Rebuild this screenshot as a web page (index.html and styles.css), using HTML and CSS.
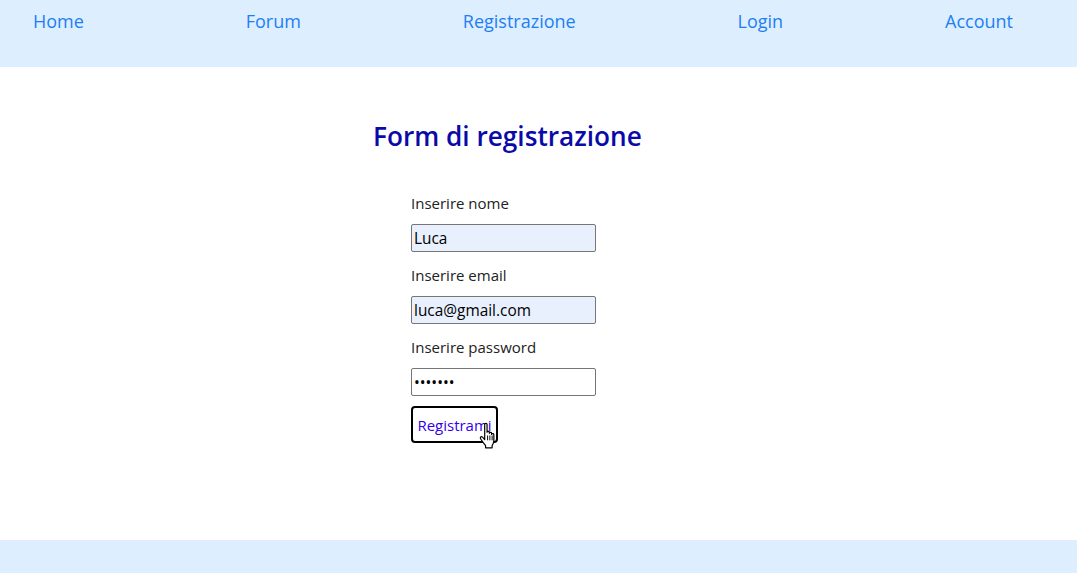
FILE: index.html
```html
<!DOCTYPE html>
<html lang="it">
<head>
<meta charset="utf-8">
<title>Registrazione</title>
<link rel="stylesheet" href="styles.css">
</head>
<body>
<header class="topbar">
  <nav class="nav">
    <a class="nav-link" href="#">Home</a>
    <a class="nav-link" href="#">Forum</a>
    <a class="nav-link" href="#">Registrazione</a>
    <a class="nav-link" href="#">Login</a>
    <a class="nav-link" href="#">Account</a>
  </nav>
</header>
<main class="main">
  <section class="panel">
    <h2 class="title">Form di registrazione</h2>
    <form class="form">
      <label class="label" for="nome">Inserire nome</label>
      <input class="field autofill" id="nome" type="text" value="Luca">
      <label class="label" for="email">Inserire email</label>
      <input class="field autofill" id="email" type="email" value="luca@gmail.com">
      <label class="label" for="pw">Inserire password</label>
      <input class="field" id="pw" type="password" value="1234567">
      <div class="btn-wrap">
        <button class="btn" type="button">Registrami</button>
        <svg class="cursor" width="22" height="28" viewBox="0 0 20 26">
          <path d="M6 2.2c0-1.3 2.2-1.3 2.2 0v7.3c0-1.1 2.1-1.1 2.1 0v1c0-1.1 2.1-1.1 2.1 0v1c0-1.1 2.1-1.1 2.1 0v5.7c0 2.3-1 3.6-1.6 4.6v2.2H6.8v-2.2C5.6 20.6 3.8 18.2 2.3 15.8 1.2 14.2 2.8 13 4 14.1l2 2.2z" fill="#fff" stroke="#000" stroke-width="1.1" stroke-linejoin="round"/>
          <path d="M8.7 12.5v4.5M10.8 12.5v4.5M12.9 12.5v4.5" stroke="#000" stroke-width="0.9"/>
        </svg>
      </div>
    </form>
  </section>
</main>
<footer class="footer"></footer>
</body>
</html>
```
FILE: styles.css
```css
* { box-sizing: border-box; }
html, body { margin: 0; padding: 0; }
body {
  font-family: "Open Sans", "Noto Sans", sans-serif;
  background: #ffffff;
  height: 573px;
  display: flex;
  flex-direction: column;
}
.topbar {
  background: #ddeeff;
  height: 67px;
}
.nav {
  display: flex;
  justify-content: space-between;
  padding: 8px 64px 0 33px;
}
.nav-link {
  color: #1e7ef5;
  text-decoration: none;
  font-size: 18px;
  line-height: 26px;
}
.main {
  flex: 1;
}
.panel {
  padding-left: 373px;
  padding-top: 49px;
}
.title {
  margin: 0;
  color: #0a0aa8;
  font-size: 26.2px;
  font-weight: 600;
  line-height: 40px;
}
.form {
  display: flex;
  flex-direction: column;
  align-items: flex-start;
  padding-left: 38px;
  padding-top: 37px;
}
.label {
  font-size: 15px;
  line-height: 20px;
  color: #222222;
  margin-bottom: 11px;
}
.field {
  width: 185px;
  height: 28px;
  border: 1px solid #767676;
  border-radius: 2px;
  padding: 0 2px;
  font-family: "Open Sans", "Noto Sans", sans-serif;
  font-size: 15.4px;
  color: #000;
  background: #fff;
  margin: 0 0 13px 0;
}
.autofill { background: #e8f0fe; }
.btn-wrap {
  position: relative;
  margin-top: -3px;
}
.btn {
  height: 37px;
  width: 87px;
  padding: 0;
  background: #fff;
  border: 2px solid #000;
  border-radius: 4px;
  color: #3300ee;
  font-family: "Open Sans", "Noto Sans", sans-serif;
  font-size: 15px;
}
.cursor {
  position: absolute;
  left: 67px;
  top: 16px;
}
.footer {
  background: #ddeeff;
  height: 33px;
}
```
